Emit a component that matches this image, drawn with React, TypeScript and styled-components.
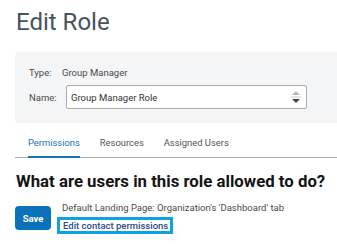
import styled, { createGlobalStyle } from "styled-components"

const GlobalStyle = createGlobalStyle`
    body {
        margin: 0;
        background: #fff;
        font-family: Roboto, "Liberation Sans", Arial, sans-serif;
    }
`

const Page = styled.div`
    padding: 8px 15px 0 15px;
    width: 337px;
    box-sizing: border-box;
    overflow: hidden;
`

const Title = styled.h1`
    margin: 0 0 0 1px;
    font-size: 24px;
    font-weight: 400;
    line-height: 28px;
    color: #45535f;
`

const Panel = styled.div`
    margin-top: 16px;
    margin-right: -20px;
    background: #f4f5f6;
    border-radius: 4px;
    padding: 15px 14px 14px 14px;
    display: flex;
    flex-direction: column;
    gap: 7px;
`

const Row = styled.div`
    display: flex;
    align-items: center;
`

const Label = styled.span`
    width: 33px;
    font-size: 9.5px;
    color: #4a4a4a;
`

const Value = styled.span`
    font-size: 9.5px;
    color: #4a4a4a;
`

const InputWrap = styled.div`
    margin-left: 4px;
    width: 241px;
    height: 24px;
    box-sizing: border-box;
    border: 1px solid #a9adb1;
    border-radius: 2px;
    background: #fff;
    display: flex;
    align-items: center;
    padding-left: 4px;
    font-size: 9.5px;
    color: #333;
`

const InputText = styled.span`
    flex: 1;
`

const Spinner = styled.div`
    width: 14px;
    height: 18px;
    margin-right: 3px;
    display: flex;
    flex-direction: column;
    align-items: center;
    justify-content: center;
`

const Tabs = styled.div`
    margin-top: 10px;
    margin-right: -20px;
    display: flex;
    gap: 20px;
    padding-left: 13px;
    border-bottom: 1px solid #a8acb0;
`

const Tab = styled.div<{ $active?: boolean }>`
    font-size: 9.4px;
    padding: 4px 0 8px;
    color: ${p => (p.$active ? "#1b73b7" : "#4f555b")};
    border-bottom: 2px solid ${p => (p.$active ? "#1b73b7" : "transparent")};
    margin-bottom: -1px;
`

const Heading = styled.h2`
    margin: 13px 0 0 1px;
    font-size: 16.8px;
    font-weight: 700;
    line-height: 20px;
    color: #141414;
    white-space: nowrap;
`

const Actions = styled.div`
    margin-top: 11px;
    display: flex;
    align-items: flex-start;
    gap: 6px;
`

const SaveButton = styled.button`
    margin-top: 4px;
    width: 36px;
    height: 24px;
    border: none;
    border-radius: 4px;
    background: #0b72ba;
    color: #fff;
    font-family: inherit;
    font-size: 9.5px;
    font-weight: 700;
    padding: 0;
`

const Info = styled.div`
    display: flex;
    flex-direction: column;
    gap: 0;
`

const InfoText = styled.span`
    font-size: 9.5px;
    line-height: 12px;
    color: #4a4a4a;
    padding-left: 5px;
`

const EditLink = styled.a`
    display: inline-block;
    border: 3px solid #0ea2e3;
    padding: 0 2px 0 3px;
    font-size: 9.5px;
    font-weight: 500;
    color: #2d4b8a;
    text-decoration: none;
    line-height: 11px;
`

const App: React.FC = () => {
    return (
        <>
            <GlobalStyle />
            <Page>
                <Title>Edit Role</Title>
                <Panel>
                    <Row>
                        <Label>Type:</Label>
                        <Value>Group Manager</Value>
                    </Row>
                    <Row>
                        <Label>Name:</Label>
                        <InputWrap>
                            <InputText>Group Manager Role</InputText>
                            <Spinner>
                                <svg width="12" height="18" viewBox="0 0 12 18">
                                    <path d="M2 7 L6 3 L10 7 Z" fill="#b4b7ba" />
                                    <line x1="1" y1="9" x2="11" y2="9" stroke="#c6c8ca" />
                                    <path d="M2 11 L10 11 L6 15 Z" fill="#3f4448" />
                                </svg>
                            </Spinner>
                        </InputWrap>
                    </Row>
                </Panel>
                <Tabs>
                    <Tab $active>Permissions</Tab>
                    <Tab>Resources</Tab>
                    <Tab>Assigned Users</Tab>
                </Tabs>
                <Heading>What are users in this role allowed to do?</Heading>
                <Actions>
                    <SaveButton>Save</SaveButton>
                    <Info>
                        <InfoText>Default Landing Page: Organization's 'Dashboard' tab</InfoText>
                        <div>
                            <EditLink href="#">Edit contact permissions</EditLink>
                        </div>
                    </Info>
                </Actions>
            </Page>
        </>
    )
}

export default App
